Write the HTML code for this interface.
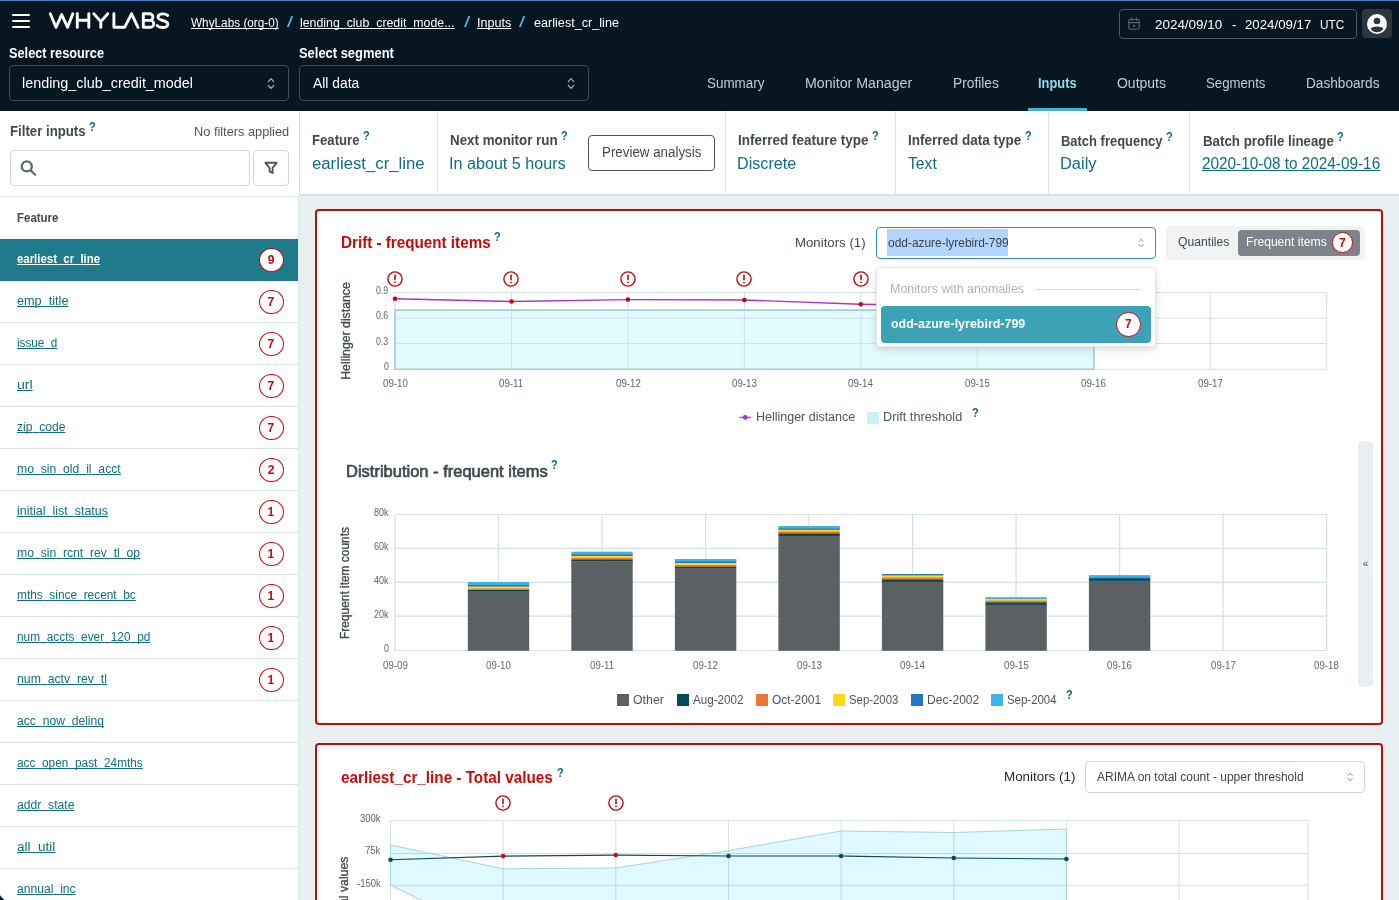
<!DOCTYPE html>
<html><head><meta charset="utf-8"><title>WhyLabs</title>
<style>
html,body{margin:0;padding:0;overflow:hidden;}
body{width:1399px;height:900px;overflow:hidden;position:relative;background:#e9f0f2;font-family:"Liberation Sans",sans-serif;}
div{position:absolute;box-sizing:border-box;}
svg{position:absolute;overflow:visible;}
.t i{color:transparent;font-style:normal;}
.t{position:absolute;white-space:nowrap;line-height:1;transform-origin:0 50%;display:block;}
#root{left:0;top:0;width:1399px;height:900px;will-change:transform;overflow:hidden;}
</style></head><body><div id="root">
<div style="left:0px;top:0px;width:1399px;height:111px;background:#061721;"></div>
<div style="left:0px;top:0px;width:1399px;height:1px;background:#4b80c3;"></div>
<div style="left:12px;top:14px;width:18px;height:2px;background:#fff;border-radius:1px;"></div>
<div style="left:12px;top:20px;width:18px;height:2px;background:#fff;border-radius:1px;"></div>
<div style="left:12px;top:26px;width:18px;height:2px;background:#fff;border-radius:1px;"></div>
<svg style="left:0;top:0" width="200" height="40" viewBox="0 0 200 40" fill="none" stroke="#fff" stroke-width="2.9" stroke-linecap="round" stroke-linejoin="round">
<path d="M50.3 13.8 L56 27.3 L61.7 14.6 L67.6 27.3 L72.8 13.8"/>
<path d="M77.3 13.8 V27.4 M88.8 13.8 V27.4 M77.3 20.3 H88.8"/>
<path d="M93.8 13.8 L100.8 21.6 L107.8 13.8 M100.8 21.6 V27.4"/>
<path d="M113.9 13.8 V27.3 H124.6 L131.6 13.8 L138 27.4"/>
<path d="M143.3 13.8 V27.3 H150.3 a3.4 3.4 0 0 0 0 -6.9 H143.3 M143.3 13.8 H149.6 a3.3 3.3 0 0 1 0 6.6"/>
<path d="M167.6 15.4 C165.6 13.4 158.4 12.8 158 17 C157.6 21.4 168 19.6 167.8 24.2 C167.6 28.4 159.4 28.2 157.2 25.6"/>
</svg>
<span class="t" style="left:190.70px;top:16.84px;font-size:12px;color:#fff;transform:scaleX(0.9817);text-decoration:underline;text-underline-offset:1px;text-decoration-skip-ink:none;">WhyLabs (org-0)</span>
<span class="t" style="left:286.70px;top:15.15px;font-size:14px;color:#55c1e6;transform:scaleX(1.5742);">/</span>
<span class="t" style="left:300.33px;top:16.84px;font-size:12px;color:#fff;transform:scaleX(1.0287);text-decoration:underline;text-underline-offset:1px;text-decoration-skip-ink:none;">lending<i>_</i>club<i>_</i>credit<i>_</i>mode...</span>
<span class="t" style="left:463.50px;top:15.15px;font-size:14px;color:#55c1e6;transform:scaleX(1.6000);">/</span>
<span class="t" style="left:476.52px;top:16.84px;font-size:12px;color:#fff;transform:scaleX(1.0496);text-decoration:underline;text-underline-offset:1px;text-decoration-skip-ink:none;">Inputs</span>
<span class="t" style="left:519.40px;top:15.15px;font-size:14px;color:#55c1e6;transform:scaleX(1.5742);">/</span>
<span class="t" style="left:533.67px;top:16.84px;font-size:12px;color:#fff;transform:scaleX(1.0524);">earliest_cr_line</span>
<div style="left:1119px;top:9px;width:238px;height:30px;border:1px solid #4e5a60;border-radius:4px;"></div>
<svg style="left:1128px;top:17px" width="12" height="13" viewBox="0 0 12 13" fill="none" stroke="#5d696f" stroke-width="1.1" stroke-linecap="round"><rect x="0.8" y="2.2" width="10.4" height="10" rx="1.6"/><path d="M0.8 5.6 H11.2 M3.6 0.8 V3.4 M8.4 0.8 V3.4"/><rect x="5" y="7.8" width="2" height="2" fill="#5d696f" stroke="none"/></svg>
<span class="t" style="left:1155.05px;top:17.80px;font-size:13px;color:#fff;transform:scaleX(1.0328);">2024/09/10</span>
<span class="t" style="left:1231.69px;top:17.80px;font-size:13px;color:#fff;transform:scaleX(1.0154);">-</span>
<span class="t" style="left:1244.76px;top:17.80px;font-size:13px;color:#fff;transform:scaleX(1.0192);">2024/09/17</span>
<span class="t" style="left:1319.79px;top:17.80px;font-size:13px;color:#fff;transform:scaleX(0.9069);">UTC</span>
<div style="left:1362px;top:9px;width:30px;height:29px;background:#2b373d;border-radius:4px;"></div>
<svg style="left:1367px;top:13.5px" width="20" height="20" viewBox="0 0 20 20"><circle cx="10" cy="10" r="10" fill="#fff"/><circle cx="10" cy="7" r="3.3" fill="#2b373d"/><path d="M3.6 14.8 C5.2 11.6 14.8 11.6 16.4 14.8 C14.8 17.4 12.6 18.2 10 18.2 C7.4 18.2 5.2 17.4 3.6 14.8 Z" fill="#2b373d"/></svg>
<span class="t" style="left:9.36px;top:46.15px;font-size:14px;color:#fff;transform:scaleX(0.9111);font-weight:700;">Select resource</span>
<div style="left:9px;top:65px;width:280px;height:36px;border:1px solid #414c52;border-radius:4px;"></div>
<span class="t" style="left:21.80px;top:75.75px;font-size:14px;color:#fff;transform:scaleX(1.0268);">lending_club_credit_model</span>
<span class="t" style="left:299.35px;top:46.15px;font-size:14px;color:#fff;transform:scaleX(0.9234);font-weight:700;">Select segment</span>
<div style="left:299px;top:65px;width:290px;height:36px;border:1px solid #414c52;border-radius:4px;"></div>
<span class="t" style="left:312.70px;top:75.75px;font-size:14px;color:#fff;transform:scaleX(0.9904);">All data</span>
<svg style="left:266.5px;top:76.5px" width="8" height="13" viewBox="0 0 8 13" fill="none" stroke="#aab3b8" stroke-width="1.2" stroke-linecap="round" stroke-linejoin="round"><path d="M1.3 4.6 L4 1.6 L6.7 4.6 M1.3 8.4 L4 11.4 L6.7 8.4"/></svg>
<svg style="left:566.5px;top:76.5px" width="8" height="13" viewBox="0 0 8 13" fill="none" stroke="#aab3b8" stroke-width="1.2" stroke-linecap="round" stroke-linejoin="round"><path d="M1.3 4.6 L4 1.6 L6.7 4.6 M1.3 8.4 L4 11.4 L6.7 8.4"/></svg>
<span class="t" style="left:707.10px;top:75.75px;font-size:14px;color:#c6ccd0;transform:scaleX(0.9586);">Summary</span>
<span class="t" style="left:805.06px;top:75.75px;font-size:14px;color:#c6ccd0;transform:scaleX(1.0124);">Monitor Manager</span>
<span class="t" style="left:952.60px;top:75.75px;font-size:14px;color:#c6ccd0;transform:scaleX(0.9817);">Profiles</span>
<span class="t" style="left:1038.30px;top:75.75px;font-size:14px;color:#8fdcf2;transform:scaleX(0.9182);font-weight:700;">Inputs</span>
<span class="t" style="left:1117.08px;top:75.75px;font-size:14px;color:#c6ccd0;transform:scaleX(0.9984);">Outputs</span>
<span class="t" style="left:1206.11px;top:75.75px;font-size:14px;color:#c6ccd0;transform:scaleX(0.9422);">Segments</span>
<span class="t" style="left:1306.01px;top:75.75px;font-size:14px;color:#c6ccd0;transform:scaleX(0.9733);">Dashboards</span>
<div style="left:1028px;top:108px;width:59px;height:3px;background:#46b4cf;"></div>
<div style="left:0px;top:111px;width:299px;height:86px;background:#fff;"></div>
<div style="left:0px;top:197px;width:298px;height:703px;background:#fff;"></div>
<div style="left:299px;top:111px;width:1px;height:85px;background:#d6e0e4;"></div>
<div style="left:298px;top:197px;width:1px;height:703px;background:#dde7ea;"></div>
<span class="t" style="left:9.87px;top:124.45px;font-size:14px;color:#3f4a4f;transform:scaleX(0.9435);font-weight:700;">Filter inputs</span>
<span class="t" style="left:89.47px;top:120.30px;font-size:13px;color:#10687a;transform:scaleX(0.8453);font-weight:700;">?</span>
<span class="t" style="left:193.64px;top:126.04px;font-size:12px;color:#4b565b;transform:scaleX(1.0648);">No filters applied</span>
<div style="left:10px;top:150px;width:240px;height:36px;border:1px solid #ced6da;border-radius:4px;background:#fff;"></div>
<svg style="left:19px;top:158px" width="20" height="20" viewBox="0 0 20 20" fill="none" stroke="#5d696f" stroke-width="2.3" stroke-linecap="round"><circle cx="7.8" cy="8.4" r="5"/><path d="M11.6 12.2 L16.2 16.8"/></svg>
<div style="left:253px;top:150px;width:36px;height:36px;border:1px solid #ced6da;border-radius:4px;background:#fff;"></div>
<svg style="left:263px;top:160px" width="16" height="16" viewBox="0 0 16 16" fill="none" stroke="#4b565b" stroke-width="1.9" stroke-linejoin="round" stroke-linecap="round"><path d="M2.4 2.8 H13.6 L9.6 8 V13 L6.6 11.4 V8 Z"/></svg>
<div style="left:0px;top:196px;width:299px;height:1px;background:#dbe5e8;"></div>
<span class="t" style="left:16.98px;top:211.84px;font-size:12px;color:#3f4a4f;transform:scaleX(0.9567);font-weight:700;">Feature</span>
<div style="left:0px;top:239px;width:298px;height:42px;background:#1f7a8b;"></div>
<span class="t" style="left:17.34px;top:252.84px;font-size:12px;color:#fff;transform:scaleX(0.9501);font-weight:700;text-decoration:underline;text-underline-offset:1px;text-decoration-skip-ink:none;">earliest<i>_</i>cr<i>_</i>line</span>
<div style="left:259px;top:247.7px;width:25px;height:24.6px;border:1.5px solid #c90808;border-radius:50%;background:#fff;"></div>
<span class="t" style="left:267.69px;top:253.54px;font-size:12px;color:#c90808;transform:scaleX(1.0000);font-weight:700;">9</span>
<div style="left:0px;top:322px;width:298px;height:1px;background:#dbe5e8;"></div>
<span class="t" style="left:17.17px;top:294.84px;font-size:12px;color:#0d6f81;transform:scaleX(1.0562);text-decoration:underline;text-underline-offset:1px;text-decoration-skip-ink:none;">emp<i>_</i>title</span>
<div style="left:259px;top:289.7px;width:25px;height:24.6px;border:1.5px solid #c90808;border-radius:50%;background:#fff;"></div>
<span class="t" style="left:267.62px;top:295.54px;font-size:12px;color:#c90808;transform:scaleX(1.0000);font-weight:700;">7</span>
<div style="left:0px;top:364px;width:298px;height:1px;background:#dbe5e8;"></div>
<span class="t" style="left:16.97px;top:336.84px;font-size:12px;color:#0d6f81;transform:scaleX(0.9730);text-decoration:underline;text-underline-offset:1px;text-decoration-skip-ink:none;">issue<i>_</i>d</span>
<div style="left:259px;top:331.7px;width:25px;height:24.6px;border:1.5px solid #c90808;border-radius:50%;background:#fff;"></div>
<span class="t" style="left:267.62px;top:337.54px;font-size:12px;color:#c90808;transform:scaleX(1.0000);font-weight:700;">7</span>
<div style="left:0px;top:406px;width:298px;height:1px;background:#dbe5e8;"></div>
<span class="t" style="left:16.82px;top:378.84px;font-size:12px;color:#0d6f81;transform:scaleX(1.1745);text-decoration:underline;text-underline-offset:1px;text-decoration-skip-ink:none;">url</span>
<div style="left:259px;top:373.7px;width:25px;height:24.6px;border:1.5px solid #c90808;border-radius:50%;background:#fff;"></div>
<span class="t" style="left:267.62px;top:379.54px;font-size:12px;color:#c90808;transform:scaleX(1.0000);font-weight:700;">7</span>
<div style="left:0px;top:448px;width:298px;height:1px;background:#dbe5e8;"></div>
<span class="t" style="left:17.20px;top:420.84px;font-size:12px;color:#0d6f81;transform:scaleX(1.0064);text-decoration:underline;text-underline-offset:1px;text-decoration-skip-ink:none;">zip<i>_</i>code</span>
<div style="left:259px;top:415.7px;width:25px;height:24.6px;border:1.5px solid #c90808;border-radius:50%;background:#fff;"></div>
<span class="t" style="left:267.62px;top:421.54px;font-size:12px;color:#c90808;transform:scaleX(1.0000);font-weight:700;">7</span>
<div style="left:0px;top:490px;width:298px;height:1px;background:#dbe5e8;"></div>
<span class="t" style="left:16.94px;top:462.84px;font-size:12px;color:#0d6f81;transform:scaleX(1.0153);text-decoration:underline;text-underline-offset:1px;text-decoration-skip-ink:none;">mo<i>_</i>sin<i>_</i>old<i>_</i>il<i>_</i>acct</span>
<div style="left:259px;top:457.7px;width:25px;height:24.6px;border:1.5px solid #c90808;border-radius:50%;background:#fff;"></div>
<span class="t" style="left:267.69px;top:463.54px;font-size:12px;color:#c90808;transform:scaleX(1.0000);font-weight:700;">2</span>
<div style="left:0px;top:532px;width:298px;height:1px;background:#dbe5e8;"></div>
<span class="t" style="left:16.92px;top:504.84px;font-size:12px;color:#0d6f81;transform:scaleX(1.0412);text-decoration:underline;text-underline-offset:1px;text-decoration-skip-ink:none;">initial<i>_</i>list<i>_</i>status</span>
<div style="left:259px;top:499.7px;width:25px;height:24.6px;border:1.5px solid #c90808;border-radius:50%;background:#fff;"></div>
<span class="t" style="left:267.44px;top:505.54px;font-size:12px;color:#c90808;transform:scaleX(1.0000);font-weight:700;">1</span>
<div style="left:0px;top:574px;width:298px;height:1px;background:#dbe5e8;"></div>
<span class="t" style="left:16.94px;top:546.84px;font-size:12px;color:#0d6f81;transform:scaleX(1.0129);text-decoration:underline;text-underline-offset:1px;text-decoration-skip-ink:none;">mo<i>_</i>sin<i>_</i>rcnt<i>_</i>rev<i>_</i>tl<i>_</i>op</span>
<div style="left:259px;top:541.7px;width:25px;height:24.6px;border:1.5px solid #c90808;border-radius:50%;background:#fff;"></div>
<span class="t" style="left:267.44px;top:547.54px;font-size:12px;color:#c90808;transform:scaleX(1.0000);font-weight:700;">1</span>
<div style="left:0px;top:616px;width:298px;height:1px;background:#dbe5e8;"></div>
<span class="t" style="left:16.96px;top:588.84px;font-size:12px;color:#0d6f81;transform:scaleX(0.9889);text-decoration:underline;text-underline-offset:1px;text-decoration-skip-ink:none;">mths<i>_</i>since<i>_</i>recent<i>_</i>bc</span>
<div style="left:259px;top:583.7px;width:25px;height:24.6px;border:1.5px solid #c90808;border-radius:50%;background:#fff;"></div>
<span class="t" style="left:267.44px;top:589.54px;font-size:12px;color:#c90808;transform:scaleX(1.0000);font-weight:700;">1</span>
<div style="left:0px;top:658px;width:298px;height:1px;background:#dbe5e8;"></div>
<span class="t" style="left:16.96px;top:630.84px;font-size:12px;color:#0d6f81;transform:scaleX(0.9891);text-decoration:underline;text-underline-offset:1px;text-decoration-skip-ink:none;">num<i>_</i>accts<i>_</i>ever<i>_</i>120<i>_</i>pd</span>
<div style="left:259px;top:625.7px;width:25px;height:24.6px;border:1.5px solid #c90808;border-radius:50%;background:#fff;"></div>
<span class="t" style="left:267.44px;top:631.54px;font-size:12px;color:#c90808;transform:scaleX(1.0000);font-weight:700;">1</span>
<div style="left:0px;top:700px;width:298px;height:1px;background:#dbe5e8;"></div>
<span class="t" style="left:16.93px;top:672.84px;font-size:12px;color:#0d6f81;transform:scaleX(1.0208);text-decoration:underline;text-underline-offset:1px;text-decoration-skip-ink:none;">num<i>_</i>actv<i>_</i>rev<i>_</i>tl</span>
<div style="left:259px;top:667.7px;width:25px;height:24.6px;border:1.5px solid #c90808;border-radius:50%;background:#fff;"></div>
<span class="t" style="left:267.44px;top:673.54px;font-size:12px;color:#c90808;transform:scaleX(1.0000);font-weight:700;">1</span>
<div style="left:0px;top:742px;width:298px;height:1px;background:#dbe5e8;"></div>
<span class="t" style="left:17.19px;top:714.84px;font-size:12px;color:#0d6f81;transform:scaleX(1.0109);text-decoration:underline;text-underline-offset:1px;text-decoration-skip-ink:none;">acc<i>_</i>now<i>_</i>delinq</span>
<div style="left:0px;top:784px;width:298px;height:1px;background:#dbe5e8;"></div>
<span class="t" style="left:17.21px;top:756.84px;font-size:12px;color:#0d6f81;transform:scaleX(0.9866);text-decoration:underline;text-underline-offset:1px;text-decoration-skip-ink:none;">acc<i>_</i>open<i>_</i>past<i>_</i>24mths</span>
<div style="left:0px;top:826px;width:298px;height:1px;background:#dbe5e8;"></div>
<span class="t" style="left:17.19px;top:798.84px;font-size:12px;color:#0d6f81;transform:scaleX(1.0121);text-decoration:underline;text-underline-offset:1px;text-decoration-skip-ink:none;">addr<i>_</i>state</span>
<div style="left:0px;top:868px;width:298px;height:1px;background:#dbe5e8;"></div>
<span class="t" style="left:17.14px;top:840.84px;font-size:12px;color:#0d6f81;transform:scaleX(1.1237);text-decoration:underline;text-underline-offset:1px;text-decoration-skip-ink:none;">all<i>_</i>util</span>
<div style="left:0px;top:910px;width:298px;height:1px;background:#dbe5e8;"></div>
<span class="t" style="left:17.20px;top:882.84px;font-size:12px;color:#0d6f81;transform:scaleX(1.0096);text-decoration:underline;text-underline-offset:1px;text-decoration-skip-ink:none;">annual<i>_</i>inc</span>
<div style="left:300px;top:111px;width:1099px;height:83px;background:#fff;"></div>
<div style="left:299px;top:194px;width:1100px;height:2px;background:#d6e0e3;"></div>
<div style="left:437px;top:111px;width:1px;height:83px;background:#dbe5e8;"></div>
<div style="left:725px;top:111px;width:1px;height:83px;background:#dbe5e8;"></div>
<div style="left:895px;top:111px;width:1px;height:83px;background:#dbe5e8;"></div>
<div style="left:1048px;top:111px;width:1px;height:83px;background:#dbe5e8;"></div>
<div style="left:1189px;top:111px;width:1px;height:83px;background:#dbe5e8;"></div>
<span class="t" style="left:311.88px;top:133.15px;font-size:14px;color:#3f4a4f;transform:scaleX(0.9401);font-weight:700;">Feature</span>
<span class="t" style="left:363.47px;top:129.30px;font-size:13px;color:#10687a;transform:scaleX(0.8453);font-weight:700;">?</span>
<span class="t" style="left:312.05px;top:156.16px;font-size:16px;color:#0d6f81;transform:scaleX(1.0463);">earliest_cr_line</span>
<span class="t" style="left:449.87px;top:133.15px;font-size:14px;color:#3f4a4f;transform:scaleX(0.9539);font-weight:700;">Next monitor run</span>
<span class="t" style="left:561.17px;top:129.30px;font-size:13px;color:#10687a;transform:scaleX(0.8453);font-weight:700;">?</span>
<span class="t" style="left:449.31px;top:156.16px;font-size:16px;color:#0d6f81;transform:scaleX(1.0092);">In about 5 hours</span>
<div style="left:588px;top:135px;width:127px;height:36px;border:1px solid #49545a;border-radius:4px;background:#fff;"></div>
<span class="t" style="left:602.13px;top:144.95px;font-size:14px;color:#3f4a4f;transform:scaleX(0.9530);">Preview analysis</span>
<span class="t" style="left:737.86px;top:133.15px;font-size:14px;color:#3f4a4f;transform:scaleX(0.9640);font-weight:700;">Inferred feature type</span>
<span class="t" style="left:872.47px;top:129.30px;font-size:13px;color:#10687a;transform:scaleX(0.8453);font-weight:700;">?</span>
<span class="t" style="left:737.44px;top:156.16px;font-size:16px;color:#0d6f81;transform:scaleX(1.0097);">Discrete</span>
<span class="t" style="left:907.86px;top:133.15px;font-size:14px;color:#3f4a4f;transform:scaleX(0.9634);font-weight:700;">Inferred data type</span>
<span class="t" style="left:1025.47px;top:129.30px;font-size:13px;color:#10687a;transform:scaleX(0.8453);font-weight:700;">?</span>
<span class="t" style="left:908.33px;top:156.16px;font-size:16px;color:#0d6f81;transform:scaleX(0.9801);">Text</span>
<span class="t" style="left:1060.59px;top:133.95px;font-size:14px;color:#3f4a4f;transform:scaleX(0.9251);font-weight:700;">Batch frequency</span>
<span class="t" style="left:1166.47px;top:130.30px;font-size:13px;color:#10687a;transform:scaleX(0.8453);font-weight:700;">?</span>
<span class="t" style="left:1060.42px;top:156.16px;font-size:16px;color:#0d6f81;transform:scaleX(1.0269);">Daily</span>
<span class="t" style="left:1202.57px;top:133.75px;font-size:14px;color:#3f4a4f;transform:scaleX(0.9503);font-weight:700;">Batch profile lineage</span>
<span class="t" style="left:1336.97px;top:130.30px;font-size:13px;color:#10687a;transform:scaleX(0.8453);font-weight:700;">?</span>
<span class="t" style="left:1202.48px;top:156.06px;font-size:16px;color:#0d6f81;transform:scaleX(0.9583);text-decoration:underline;text-underline-offset:1px;text-decoration-skip-ink:none;">2020-10-08 to 2024-09-16</span>
<div style="left:315px;top:209px;width:1068px;height:516px;border:2px solid #c90808;border-radius:4px;background:#fff;"></div>
<span class="t" style="left:341.45px;top:235.46px;font-size:16px;color:#c90808;transform:scaleX(0.9509);font-weight:700;">Drift - frequent items</span>
<span class="t" style="left:494.47px;top:230.30px;font-size:13px;color:#10687a;transform:scaleX(0.8453);font-weight:700;">?</span>
<span class="t" style="left:795.18px;top:236.00px;font-size:13px;color:#3f4a4f;transform:scaleX(1.0174);">Monitors (1)</span>
<svg style="left:0;top:0" width="1399" height="900" viewBox="0 0 1399 900">
<path d="M395.0 310.1 H1093.8 V369.3 H395.0 Z" fill="#e3fafe"/>
<line x1="395.0" x2="1326.7" y1="292.5" y2="292.5" stroke="#d3e0e4" stroke-width="1"/>
<line x1="395.0" x2="1093.8" y1="318.2" y2="318.2" stroke="#cbe5ea" stroke-width="1"/>
<line x1="1093.8" x2="1326.7" y1="318.2" y2="318.2" stroke="#d3e0e4" stroke-width="1"/>
<line x1="395.0" x2="1093.8" y1="343.5" y2="343.5" stroke="#cbe5ea" stroke-width="1"/>
<line x1="1093.8" x2="1326.7" y1="343.5" y2="343.5" stroke="#d3e0e4" stroke-width="1"/>
<line x1="395.0" x2="1093.8" y1="369.3" y2="369.3" stroke="#cbe5ea" stroke-width="1"/>
<line x1="1093.8" x2="1326.7" y1="369.3" y2="369.3" stroke="#d3e0e4" stroke-width="1"/>
<line x1="395.0" x2="395.0" y1="292.5" y2="310.1" stroke="#d3e0e4" stroke-width="1"/>
<line x1="395.0" x2="395.0" y1="310.1" y2="369.3" stroke="#cbe5ea" stroke-width="1"/>
<line x1="511.5" x2="511.5" y1="292.5" y2="310.1" stroke="#d3e0e4" stroke-width="1"/>
<line x1="511.5" x2="511.5" y1="310.1" y2="369.3" stroke="#cbe5ea" stroke-width="1"/>
<line x1="627.9" x2="627.9" y1="292.5" y2="310.1" stroke="#d3e0e4" stroke-width="1"/>
<line x1="627.9" x2="627.9" y1="310.1" y2="369.3" stroke="#cbe5ea" stroke-width="1"/>
<line x1="744.4" x2="744.4" y1="292.5" y2="310.1" stroke="#d3e0e4" stroke-width="1"/>
<line x1="744.4" x2="744.4" y1="310.1" y2="369.3" stroke="#cbe5ea" stroke-width="1"/>
<line x1="860.8" x2="860.8" y1="292.5" y2="310.1" stroke="#d3e0e4" stroke-width="1"/>
<line x1="860.8" x2="860.8" y1="310.1" y2="369.3" stroke="#cbe5ea" stroke-width="1"/>
<line x1="977.3" x2="977.3" y1="292.5" y2="310.1" stroke="#d3e0e4" stroke-width="1"/>
<line x1="977.3" x2="977.3" y1="310.1" y2="369.3" stroke="#cbe5ea" stroke-width="1"/>
<line x1="1093.8" x2="1093.8" y1="292.5" y2="369.3" stroke="#d3e0e4" stroke-width="1"/>
<line x1="1210.2" x2="1210.2" y1="292.5" y2="369.3" stroke="#d3e0e4" stroke-width="1"/>
<line x1="1326.7" x2="1326.7" y1="292.5" y2="369.3" stroke="#d3e0e4" stroke-width="1"/>
<path d="M395.0 369.3 V310.1 H1093.8 V369.3 Z" fill="none" stroke="#9fd2db" stroke-width="1.6"/>
<polyline fill="none" stroke="#a436cf" stroke-width="1.4" points="395.0,298.8 511.5,301.5 627.9,299.6 744.4,300.0 860.8,304.3 977.3,306.5 1093.8,308.5"/>
<circle cx="395.0" cy="298.8" r="2.3" fill="#c90808"/>
<circle cx="511.5" cy="301.5" r="2.3" fill="#c90808"/>
<circle cx="627.9" cy="299.6" r="2.3" fill="#c90808"/>
<circle cx="744.4" cy="300.0" r="2.3" fill="#c90808"/>
<circle cx="860.8" cy="304.3" r="2.3" fill="#c90808"/>
</svg>
<svg style="left:387.0px;top:270.8px" width="16" height="16" viewBox="0 0 16 16" fill="none" stroke="#c90808" stroke-width="1.4" stroke-linecap="round"><circle cx="8" cy="8" r="7.1"/><path d="M8 4.3 V8.6" stroke-width="1.6"/><circle cx="8" cy="11.3" r="0.9" fill="#c90808" stroke="none"/></svg>
<svg style="left:503.46px;top:270.8px" width="16" height="16" viewBox="0 0 16 16" fill="none" stroke="#c90808" stroke-width="1.4" stroke-linecap="round"><circle cx="8" cy="8" r="7.1"/><path d="M8 4.3 V8.6" stroke-width="1.6"/><circle cx="8" cy="11.3" r="0.9" fill="#c90808" stroke="none"/></svg>
<svg style="left:619.92px;top:270.8px" width="16" height="16" viewBox="0 0 16 16" fill="none" stroke="#c90808" stroke-width="1.4" stroke-linecap="round"><circle cx="8" cy="8" r="7.1"/><path d="M8 4.3 V8.6" stroke-width="1.6"/><circle cx="8" cy="11.3" r="0.9" fill="#c90808" stroke="none"/></svg>
<svg style="left:736.38px;top:270.8px" width="16" height="16" viewBox="0 0 16 16" fill="none" stroke="#c90808" stroke-width="1.4" stroke-linecap="round"><circle cx="8" cy="8" r="7.1"/><path d="M8 4.3 V8.6" stroke-width="1.6"/><circle cx="8" cy="11.3" r="0.9" fill="#c90808" stroke="none"/></svg>
<svg style="left:852.8399999999999px;top:270.8px" width="16" height="16" viewBox="0 0 16 16" fill="none" stroke="#c90808" stroke-width="1.4" stroke-linecap="round"><circle cx="8" cy="8" r="7.1"/><path d="M8 4.3 V8.6" stroke-width="1.6"/><circle cx="8" cy="11.3" r="0.9" fill="#c90808" stroke="none"/></svg>
<span class="t" style="left:376.42px;top:285.84px;font-size:10px;color:#5b666b;transform:scaleX(0.8800);">0.9</span>
<span class="t" style="left:376.42px;top:311.34px;font-size:10px;color:#5b666b;transform:scaleX(0.8800);">0.6</span>
<span class="t" style="left:376.42px;top:337.04px;font-size:10px;color:#5b666b;transform:scaleX(0.8800);">0.3</span>
<span class="t" style="left:383.68px;top:362.14px;font-size:10px;color:#5b666b;transform:scaleX(0.8800);">0</span>
<span class="t" style="left:382.57px;top:378.94px;font-size:10px;color:#5b666b;transform:scaleX(0.9700);">09-10</span>
<span class="t" style="left:499.46px;top:378.94px;font-size:10px;color:#5b666b;transform:scaleX(0.9700);">09-11</span>
<span class="t" style="left:615.55px;top:378.94px;font-size:10px;color:#5b666b;transform:scaleX(0.9700);">09-12</span>
<span class="t" style="left:732.01px;top:378.94px;font-size:10px;color:#5b666b;transform:scaleX(0.9700);">09-13</span>
<span class="t" style="left:848.41px;top:378.94px;font-size:10px;color:#5b666b;transform:scaleX(0.9700);">09-14</span>
<span class="t" style="left:964.93px;top:378.94px;font-size:10px;color:#5b666b;transform:scaleX(0.9700);">09-15</span>
<span class="t" style="left:1081.39px;top:378.94px;font-size:10px;color:#5b666b;transform:scaleX(0.9700);">09-16</span>
<span class="t" style="left:1197.85px;top:378.94px;font-size:10px;color:#5b666b;transform:scaleX(0.9700);">09-17</span>
<span class="t" style="left:345.7px;top:330.65px;font-size:12px;color:#3f4a4f;transform:translate(-50%,-50%) rotate(-90deg) scaleX(1.0220);transform-origin:50% 50%;-webkit-text-stroke:0.35px;">Hellinger distance</span>
<svg style="left:739px;top:412px" width="13" height="10" viewBox="0 0 13 10"><line x1="0.5" x2="12" y1="5.4" y2="5.4" stroke="#a436cf" stroke-width="1.3"/><circle cx="6.2" cy="5.4" r="2.4" fill="#a436cf"/></svg>
<span class="t" style="left:755.86px;top:410.64px;font-size:12px;color:#4b565b;transform:scaleX(1.0397);">Hellinger distance</span>
<div style="left:867px;top:412px;width:12px;height:12px;background:#c8f3fb;"></div>
<span class="t" style="left:882.84px;top:410.64px;font-size:12px;color:#4b565b;transform:scaleX(1.0607);">Drift threshold</span>
<span class="t" style="left:971.97px;top:406.30px;font-size:13px;color:#135f6d;transform:scaleX(0.8453);font-weight:700;">?</span>
<span class="t" style="left:345.75px;top:463.86px;font-size:16px;color:#3f4a4f;transform:scaleX(1.0307);-webkit-text-stroke:0.65px;">Distribution - frequent items</span>
<span class="t" style="left:551.47px;top:458.30px;font-size:13px;color:#10687a;transform:scaleX(0.8453);font-weight:700;">?</span>
<svg style="left:0;top:0" width="1399" height="900" viewBox="0 0 1399 900" shape-rendering="auto">
<line x1="395.0" x2="1327" y1="514.5" y2="514.5" stroke="#d3e0e4" stroke-width="1.2"/>
<line x1="395.0" x2="1327" y1="548.3" y2="548.3" stroke="#d3e0e4" stroke-width="1.2"/>
<line x1="395.0" x2="1327" y1="582.3" y2="582.3" stroke="#d3e0e4" stroke-width="1.2"/>
<line x1="395.0" x2="1327" y1="616.2" y2="616.2" stroke="#d3e0e4" stroke-width="1.2"/>
<line x1="395.0" x2="1327" y1="650.5" y2="650.5" stroke="#d3e0e4" stroke-width="1.2"/>
<line x1="395.0" x2="395.0" y1="514.5" y2="650.5" stroke="#d3e0e4" stroke-width="1.2"/>
<line x1="498.5" x2="498.5" y1="514.5" y2="650.5" stroke="#d3e0e4" stroke-width="1.2"/>
<line x1="602.0" x2="602.0" y1="514.5" y2="650.5" stroke="#d3e0e4" stroke-width="1.2"/>
<line x1="705.6" x2="705.6" y1="514.5" y2="650.5" stroke="#d3e0e4" stroke-width="1.2"/>
<line x1="809.1" x2="809.1" y1="514.5" y2="650.5" stroke="#d3e0e4" stroke-width="1.2"/>
<line x1="912.6" x2="912.6" y1="514.5" y2="650.5" stroke="#d3e0e4" stroke-width="1.2"/>
<line x1="1016.1" x2="1016.1" y1="514.5" y2="650.5" stroke="#d3e0e4" stroke-width="1.2"/>
<line x1="1119.6" x2="1119.6" y1="514.5" y2="650.5" stroke="#d3e0e4" stroke-width="1.2"/>
<line x1="1223.2" x2="1223.2" y1="514.5" y2="650.5" stroke="#d3e0e4" stroke-width="1.2"/>
<line x1="1326.7" x2="1326.7" y1="514.5" y2="650.5" stroke="#d3e0e4" stroke-width="1.2"/>
<rect x="467.8" y="582.0" width="61.4" height="3.3" fill="#3cb4e4"/>
<rect x="467.8" y="585.0" width="61.4" height="1.9" fill="#2375c6"/>
<rect x="467.8" y="586.6" width="61.4" height="2.2" fill="#fdd91e"/>
<rect x="467.8" y="588.5" width="61.4" height="1.8" fill="#f07531"/>
<rect x="467.8" y="590.0" width="61.4" height="1.8" fill="#07485a"/>
<rect x="467.8" y="591.5" width="61.4" height="59.3" fill="#5a6064"/>
<rect x="571.3" y="551.7" width="61.4" height="3.0" fill="#3cb4e4"/>
<rect x="571.3" y="554.4" width="61.4" height="1.9" fill="#2375c6"/>
<rect x="571.3" y="556.0" width="61.4" height="2.2" fill="#fdd91e"/>
<rect x="571.3" y="557.9" width="61.4" height="2.0" fill="#f07531"/>
<rect x="571.3" y="559.6" width="61.4" height="2.0" fill="#07485a"/>
<rect x="571.3" y="561.3" width="61.4" height="89.5" fill="#5a6064"/>
<rect x="674.9" y="559.0" width="61.4" height="2.6" fill="#3cb4e4"/>
<rect x="674.9" y="561.3" width="61.4" height="2.0" fill="#2375c6"/>
<rect x="674.9" y="563.0" width="61.4" height="2.3" fill="#fdd91e"/>
<rect x="674.9" y="565.0" width="61.4" height="2.1" fill="#f07531"/>
<rect x="674.9" y="566.8" width="61.4" height="2.0" fill="#07485a"/>
<rect x="674.9" y="568.5" width="61.4" height="82.3" fill="#5a6064"/>
<rect x="778.4" y="526.0" width="61.4" height="2.6" fill="#3cb4e4"/>
<rect x="778.4" y="528.3" width="61.4" height="1.8" fill="#2375c6"/>
<rect x="778.4" y="529.8" width="61.4" height="2.0" fill="#fdd91e"/>
<rect x="778.4" y="531.5" width="61.4" height="2.3" fill="#f07531"/>
<rect x="778.4" y="533.5" width="61.4" height="2.8" fill="#07485a"/>
<rect x="778.4" y="536.0" width="61.4" height="114.8" fill="#5a6064"/>
<rect x="881.9" y="574.0" width="61.4" height="1.8" fill="#2375c6"/>
<rect x="881.9" y="575.5" width="61.4" height="2.3" fill="#fdd91e"/>
<rect x="881.9" y="577.5" width="61.4" height="2.3" fill="#f07531"/>
<rect x="881.9" y="579.5" width="61.4" height="2.6" fill="#07485a"/>
<rect x="881.9" y="581.8" width="61.4" height="69.0" fill="#5a6064"/>
<rect x="985.4" y="597.1" width="61.4" height="2.2" fill="#3cb4e4"/>
<rect x="985.4" y="599.0" width="61.4" height="2.0" fill="#fdd91e"/>
<rect x="985.4" y="600.7" width="61.4" height="2.0" fill="#f07531"/>
<rect x="985.4" y="602.4" width="61.4" height="2.6" fill="#07485a"/>
<rect x="985.4" y="604.7" width="61.4" height="46.1" fill="#5a6064"/>
<rect x="1088.9" y="575.1" width="61.4" height="2.6" fill="#3cb4e4"/>
<rect x="1088.9" y="577.4" width="61.4" height="1.6" fill="#2375c6"/>
<rect x="1088.9" y="578.7" width="61.4" height="2.3" fill="#07485a"/>
<rect x="1088.9" y="580.7" width="61.4" height="70.1" fill="#5a6064"/>
</svg>
<span class="t" style="left:373.99px;top:507.74px;font-size:10px;color:#5b666b;transform:scaleX(0.9000);">80k</span>
<span class="t" style="left:373.99px;top:541.53px;font-size:10px;color:#5b666b;transform:scaleX(0.9000);">60k</span>
<span class="t" style="left:373.99px;top:575.53px;font-size:10px;color:#5b666b;transform:scaleX(0.9000);">40k</span>
<span class="t" style="left:373.99px;top:609.53px;font-size:10px;color:#5b666b;transform:scaleX(0.9000);">20k</span>
<span class="t" style="left:383.78px;top:643.74px;font-size:10px;color:#5b666b;transform:scaleX(0.9000);">0</span>
<span class="t" style="left:382.63px;top:660.74px;font-size:10px;color:#5b666b;transform:scaleX(0.9700);">09-09</span>
<span class="t" style="left:486.09px;top:660.74px;font-size:10px;color:#5b666b;transform:scaleX(0.9700);">09-10</span>
<span class="t" style="left:590.04px;top:660.74px;font-size:10px;color:#5b666b;transform:scaleX(0.9700);">09-11</span>
<span class="t" style="left:693.19px;top:660.74px;font-size:10px;color:#5b666b;transform:scaleX(0.9700);">09-12</span>
<span class="t" style="left:796.71px;top:660.74px;font-size:10px;color:#5b666b;transform:scaleX(0.9700);">09-13</span>
<span class="t" style="left:900.17px;top:660.74px;font-size:10px;color:#5b666b;transform:scaleX(0.9700);">09-14</span>
<span class="t" style="left:1003.75px;top:660.74px;font-size:10px;color:#5b666b;transform:scaleX(0.9700);">09-15</span>
<span class="t" style="left:1107.27px;top:660.74px;font-size:10px;color:#5b666b;transform:scaleX(0.9700);">09-16</span>
<span class="t" style="left:1210.79px;top:660.74px;font-size:10px;color:#5b666b;transform:scaleX(0.9700);">09-17</span>
<span class="t" style="left:1314.31px;top:660.74px;font-size:10px;color:#5b666b;transform:scaleX(0.9700);">09-18</span>
<span class="t" style="left:345.2px;top:582.8499999999999px;font-size:12px;color:#3f4a4f;transform:translate(-50%,-50%) rotate(-90deg) scaleX(0.9926);transform-origin:50% 50%;-webkit-text-stroke:0.35px;">Frequent item counts</span>
<div style="left:617px;top:694px;width:12px;height:12px;background:#5a6064;"></div>
<span class="t" style="left:633.49px;top:693.64px;font-size:12px;color:#4b565b;transform:scaleX(1.0281);">Other</span>
<div style="left:677px;top:694px;width:12px;height:12px;background:#07485a;"></div>
<span class="t" style="left:693.20px;top:693.64px;font-size:12px;color:#4b565b;transform:scaleX(0.9709);">Aug-2002</span>
<div style="left:755.7px;top:694px;width:12px;height:12px;background:#f07531;"></div>
<span class="t" style="left:772.20px;top:693.64px;font-size:12px;color:#4b565b;transform:scaleX(0.9948);">Oct-2001</span>
<div style="left:832.7px;top:694px;width:12px;height:12px;background:#fdd91e;"></div>
<span class="t" style="left:849.43px;top:693.64px;font-size:12px;color:#4b565b;transform:scaleX(0.9471);">Sep-2003</span>
<div style="left:910.7px;top:694px;width:12px;height:12px;background:#2375c6;"></div>
<span class="t" style="left:926.70px;top:693.64px;font-size:12px;color:#4b565b;transform:scaleX(1.0040);">Dec-2002</span>
<div style="left:991px;top:694px;width:12px;height:12px;background:#3cb4e4;"></div>
<span class="t" style="left:1006.82px;top:693.64px;font-size:12px;color:#4b565b;transform:scaleX(0.9522);">Sep-2004</span>
<span class="t" style="left:1066.47px;top:688.10px;font-size:13px;color:#135f6d;transform:scaleX(0.8453);font-weight:700;">?</span>
<div style="left:1358px;top:441px;width:15px;height:246px;background:#e9f0f2;border-radius:4px;"></div>
<span class="t" style="left:1362.69px;top:559.03px;font-size:10px;color:#3f4a4f;transform:scaleX(1.0000);">«</span>
<div style="left:876px;top:227px;width:280px;height:32px;border:1px solid #2a8be6;border-radius:4px;background:#fff;"></div>
<div style="left:887px;top:229.2px;width:121px;height:27.3px;background:#b3d5fd;"></div>
<span class="t" style="left:887.80px;top:236.84px;font-size:12px;color:#3a4449;transform:scaleX(0.9944);">odd-azure-lyrebird-799</span>
<svg style="left:1138px;top:238px" width="6.4" height="10" viewBox="0 0 8 13" fill="none" stroke="#8a949a" stroke-width="1.3" stroke-linecap="round" stroke-linejoin="round"><path d="M1.3 4.6 L4 1.6 L6.7 4.6 M1.3 8.4 L4 11.4 L6.7 8.4"/></svg>
<div style="left:876px;top:267px;width:280px;height:80px;border:1px solid #e3e8eb;border-radius:4px;background:#fff;box-shadow:0 2px 6px rgba(0,0,0,0.10),0 6px 12px rgba(0,0,0,0.05);"></div>
<span class="t" style="left:890.46px;top:282.84px;font-size:12px;color:#a9b3b9;transform:scaleX(1.0418);">Monitors with anomalies</span>
<div style="left:1035px;top:289px;width:106px;height:1px;background:#cfd8dc;"></div>
<div style="left:881px;top:306.3px;width:270px;height:36.3px;background:#3da2b6;border-radius:4px;"></div>
<span class="t" style="left:891.11px;top:318.04px;font-size:12px;color:#fff;transform:scaleX(1.0379);font-weight:700;">odd-azure-lyrebird-799</span>
<div style="left:1116px;top:312px;width:24.6px;height:24.6px;border:1.5px solid #c90808;border-radius:50%;background:#fff;"></div>
<span class="t" style="left:1124.92px;top:318.44px;font-size:12px;color:#c90808;transform:scaleX(1.0000);font-weight:700;">7</span>
<div style="left:1166px;top:226px;width:199px;height:34px;background:#f0f2f4;border-radius:4px;"></div>
<span class="t" style="left:1177.89px;top:236.14px;font-size:12px;color:#3f4a4f;transform:scaleX(1.0145);">Quantiles</span>
<div style="left:1238px;top:230px;width:122px;height:26px;background:#7c838b;border-radius:4px;"></div>
<span class="t" style="left:1246.19px;top:236.14px;font-size:12px;color:#fff;transform:scaleX(1.0086);">Frequent items</span>
<div style="left:1332px;top:232.2px;width:20.6px;height:20.6px;border:1.3px solid #c90808;border-radius:50%;background:#fff;"></div>
<span class="t" style="left:1338.92px;top:236.64px;font-size:12px;color:#c90808;transform:scaleX(1.0000);font-weight:700;">7</span>
<div style="left:315px;top:743px;width:1068px;height:200px;border:2px solid #c90808;border-radius:4px;background:#fff;"></div>
<span class="t" style="left:341.40px;top:769.66px;font-size:16px;color:#c90808;transform:scaleX(0.9536);font-weight:700;">earliest_cr_line - Total values</span>
<span class="t" style="left:557.47px;top:765.80px;font-size:13px;color:#10687a;transform:scaleX(0.8453);font-weight:700;">?</span>
<span class="t" style="left:1003.87px;top:770.00px;font-size:13px;color:#1d262a;transform:scaleX(1.0292);">Monitors (1)</span>
<div style="left:1085px;top:761px;width:280px;height:32px;border:1px solid #ced6da;border-radius:4px;background:#fff;"></div>
<span class="t" style="left:1096.70px;top:770.84px;font-size:12px;color:#3a4449;transform:scaleX(0.9990);">ARIMA on total count - upper threshold</span>
<svg style="left:1347.3px;top:772px" width="6.4" height="10" viewBox="0 0 8 13" fill="none" stroke="#8a949a" stroke-width="1.3" stroke-linecap="round" stroke-linejoin="round"><path d="M1.3 4.6 L4 1.6 L6.7 4.6 M1.3 8.4 L4 11.4 L6.7 8.4"/></svg>
<svg style="left:0;top:0" width="1399" height="900" viewBox="0 0 1399 900">
<line x1="390.5" x2="1308" y1="820.5" y2="820.5" stroke="#d3e0e4" stroke-width="1"/>
<line x1="390.5" x2="1308" y1="853.5" y2="853.5" stroke="#d3e0e4" stroke-width="1"/>
<line x1="390.5" x2="1308" y1="885.3" y2="885.3" stroke="#d3e0e4" stroke-width="1"/>
<line x1="390.5" x2="390.5" y1="820.5" y2="900" stroke="#d3e0e4" stroke-width="1"/>
<line x1="503.1" x2="503.1" y1="820.5" y2="900" stroke="#d3e0e4" stroke-width="1"/>
<line x1="615.8" x2="615.8" y1="820.5" y2="900" stroke="#d3e0e4" stroke-width="1"/>
<line x1="728.5" x2="728.5" y1="820.5" y2="900" stroke="#d3e0e4" stroke-width="1"/>
<line x1="841.1" x2="841.1" y1="820.5" y2="900" stroke="#d3e0e4" stroke-width="1"/>
<line x1="953.8" x2="953.8" y1="820.5" y2="900" stroke="#d3e0e4" stroke-width="1"/>
<line x1="1066.4" x2="1066.4" y1="820.5" y2="900" stroke="#d3e0e4" stroke-width="1"/>
<line x1="1179.1" x2="1179.1" y1="820.5" y2="900" stroke="#d3e0e4" stroke-width="1"/>
<line x1="1308" x2="1308" y1="820.5" y2="900" stroke="#d3e0e4" stroke-width="1"/>
<path d="M390.5 845.0 L503.1 868.8 L615.8 868.0 L728.5 850.6 L841.1 831.0 L953.8 832.5 L1066.4 829.0 L1066.4 905 L431 905 L390.5 885.0 Z" fill="#e0f9fe" style="mix-blend-mode:multiply"/>
<path d="M390.5 845.0 L503.1 868.8 L615.8 868.0 L728.5 850.6 L841.1 831.0 L953.8 832.5 L1066.4 829.0 L1066.4 905 L431 905 L390.5 885.0 Z" fill="none" stroke="#a5d4dc" stroke-width="1"/>
<polyline fill="none" stroke="#0a4a5b" stroke-width="1.1" points="390.5,859.8 503.1,856.1 615.8,855.1 728.5,856.0 841.1,856.0 953.8,858.0 1066.4,859.0"/>
<circle cx="390.5" cy="859.8" r="2.3" fill="#0a4a5b"/>
<circle cx="503.1" cy="856.1" r="2.3" fill="#cf0f12"/>
<circle cx="615.8" cy="855.1" r="2.3" fill="#cf0f12"/>
<circle cx="728.5" cy="856.0" r="2.3" fill="#0a4a5b"/>
<circle cx="841.1" cy="856.0" r="2.3" fill="#0a4a5b"/>
<circle cx="953.8" cy="858.0" r="2.3" fill="#0a4a5b"/>
<circle cx="1066.4" cy="859.0" r="2.3" fill="#0a4a5b"/>
</svg>
<svg style="left:495.15px;top:795px" width="16" height="16" viewBox="0 0 16 16" fill="none" stroke="#c90808" stroke-width="1.4" stroke-linecap="round"><circle cx="8" cy="8" r="7.1"/><path d="M8 4.3 V8.6" stroke-width="1.6"/><circle cx="8" cy="11.3" r="0.9" fill="#c90808" stroke="none"/></svg>
<svg style="left:607.8px;top:795px" width="16" height="16" viewBox="0 0 16 16" fill="none" stroke="#c90808" stroke-width="1.4" stroke-linecap="round"><circle cx="8" cy="8" r="7.1"/><path d="M8 4.3 V8.6" stroke-width="1.6"/><circle cx="8" cy="11.3" r="0.9" fill="#c90808" stroke="none"/></svg>
<span class="t" style="left:359.94px;top:813.93px;font-size:10px;color:#5b666b;transform:scaleX(0.9500);">300k</span>
<span class="t" style="left:365.28px;top:846.43px;font-size:10px;color:#5b666b;transform:scaleX(0.9500);">75k</span>
<span class="t" style="left:356.85px;top:878.83px;font-size:10px;color:#5b666b;transform:scaleX(0.9500);">-150k</span>
<span class="t" style="left:343.8px;top:889.25px;font-size:12px;color:#3f4a4f;transform:translate(-50%,-50%) rotate(-90deg) scaleX(1.0222);transform-origin:50% 50%;-webkit-text-stroke:0.35px;">Total values</span>
<svg style="left:0;top:890px" width="10" height="10" viewBox="0 0 10 10"><path d="M0 5 C1.2 7 2.8 8.8 4.8 10 H0 Z" fill="#0b1a22"/></svg>
</div></body></html>
